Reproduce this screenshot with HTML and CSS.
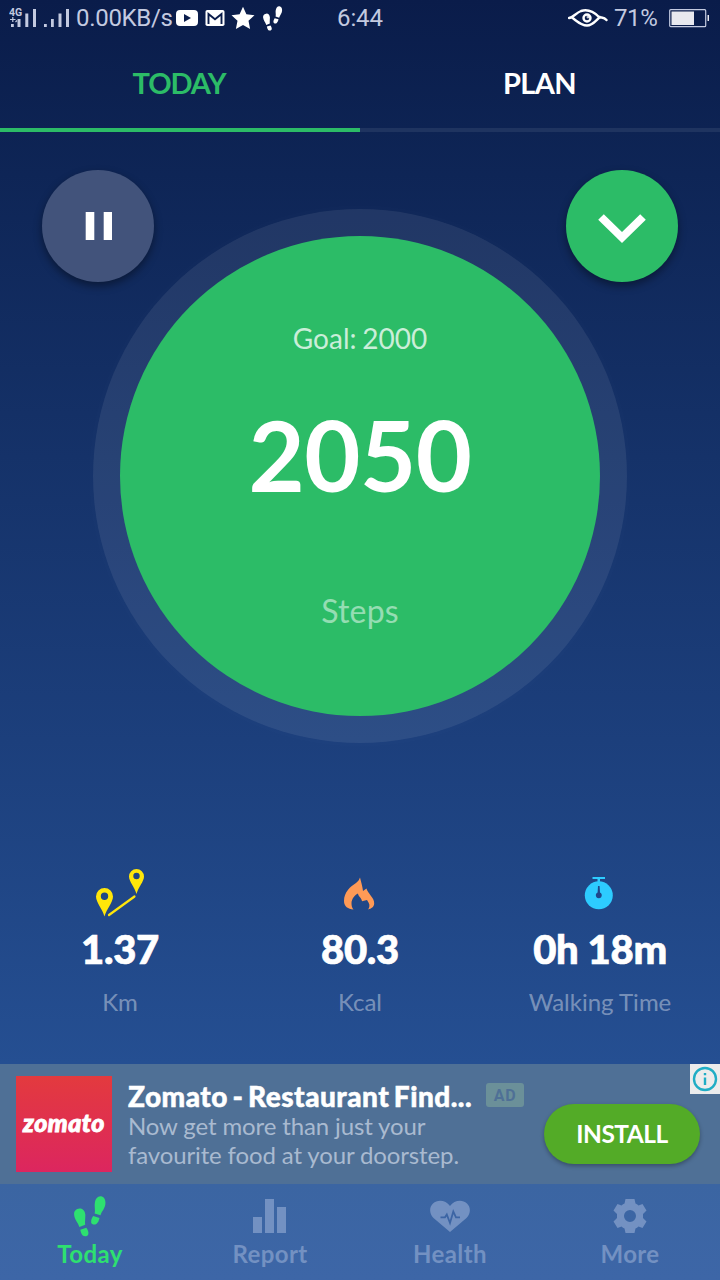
FILE: index.html
```html
<!DOCTYPE html>
<html lang="en">
<head>
<meta charset="utf-8">
<title>Step Counter</title>
<link rel="stylesheet" href="styles.css">
</head>
<body>
<svg class="defs" width="0" height="0" aria-hidden="true">
  <symbol id="feet" viewBox="0 0 32 41">
    <path d="M5.500 12.500C8.500 12.200 11 14.700 11.300 18.500C11.500 22 10.700 24.500 11.200 28.800L5.400 31C4 26.500.4 23.500.1 18.500C-.1 15 2.200 12.800 5.500 12.500Z"/>
    <path d="M6.300 33.700L12.300 31.800C13.800 33.700 14.800 36.200 14.300 38.200C13.700 40.700 10.200 41 8.500 39.200C7.200 37.800 6.700 35.500 6.300 33.700Z"/>
    <path d="M27 .300C30 .7 31.700 3.700 31.400 7.500C31.200 12.500 27.700 15 26.500 19.300L20.600 17.400C21.500 13.800 20.300 11.500 20.800 7.500C21.200 3 23.700-.1 27 .3Z"/>
    <path d="M19.200 20L25.500 21.900C25 24 24.200 26.300 22.600 27.700C20.700 29.200 17.700 28.700 17.200 26.500C16.800 24.300 17.900 21.800 19.200 20Z"/>
  </symbol>
</svg>
<div class="app">
  <header class="status">
    <svg class="signals" width="64" height="24" viewBox="0 0 64 24">
      <text class="net" x="0" y="10">4G</text>
      <path d="M2 18h2.800v3H2zM8.500 13h3v8h-3zM16.300 7.500h3V21h-3zM24 3h3v18h-3zM35 18h2.800v3H35zM42 13h2.800v8H42zM49.500 7.500h3V21h-3zM57 3h3v18h-3z"/>
      <path d="M1 13.500h5.500M3.800 11v5M6.500 16l1.500-1.500" class="mark"/>
    </svg>
    <span class="speed">0.00KB/s</span>
    <svg class="notices" width="112" height="28" viewBox="0 0 112 28">
      <path fill-rule="evenodd" d="M4 4H18Q22 4 22 8V16Q22 20 18 20H4Q0 20 0 16V8Q0 4 4 4ZM8 8V16L15 12Z"/>
      <rect x="29.500" y="4" width="19" height="16" rx="1.800"/>
      <path class="letter" d="M32.500 18V8L39 13.300L45.500 8V18"/>
      <path d="M67 .800L70.400 8.200L78.500 9.200L72.500 14.800L74.100 23L67 19L59.900 23L61.500 14.800L55.500 9.200L63.600 8.200Z"/>
      <use href="#feet" x="87" y="0" width="19.500" height="25"/>
    </svg>
    <span class="clock">6:44</span>
    <svg class="eye" width="40" height="20" viewBox="0 0 40 20">
      <path d="M1 10C5 9.500 8 5 13 3C20 .8 26 4 31 9C34 10 36 9 38.500 12M4 9.500C10 14 13 17.500 19 17.500C25 17.500 28 12 32 9"/>
      <circle cx="19" cy="10" r="3.500"/><circle class="dot" cx="20" cy="9" r="1"/>
    </svg>
    <span class="percent">71%</span>
    <svg class="battery" width="41" height="20" viewBox="0 0 41 20"><rect x=".7" y="1.700" width="36" height="17" rx="1"/><path d="M2.500 3.500H25V17H2.500ZM38.500 7H40V13H38.500Z"/></svg>
  </header>

  <nav class="tabs">
    <a class="tab active">TODAY</a>
    <a class="tab">PLAN</a>
  </nav>

  <main class="stage">
    <div class="dial">
      <div class="dial-face">
        <div class="goal">Goal: 2000</div>
        <div class="count">2050</div>
        <div class="unit">Steps</div>
      </div>
    </div>
    <button class="round pause" aria-label="Pause"><svg width="28" height="30" viewBox="0 0 28 30"><path d="M1.700 1H10.300V29H1.700ZM19.700 1H28V29H19.700Z"/></svg></button>
    <button class="round expand" aria-label="Expand"><svg width="48" height="32" viewBox="0 0 48 32"><path d="M3 5L24 25.500L45 5"/></svg></button>
  </main>

  <section class="stats">
    <div class="stat">
      <svg class="stat-icon route" width="50" height="50" viewBox="0 0 50 50">
        <path fill-rule="evenodd" d="M9.500 48.500C7.500 41 1 34.500 1 28.500A8.500 8.500 0 0 1 18 28.500C18 34.500 11.500 41 9.500 48.500ZM9.500 24.500A3.700 3.700 0 1 0 9.500 31.900A3.700 3.700 0 1 0 9.500 24.500ZM41.500 26C39.700 19 34 13.500 34 8.500A7.500 7.500 0 0 1 49 8.500C49 13.500 43.300 19 41.500 26ZM41.500 4.800A3.200 3.200 0 1 0 41.500 11.200A3.200 3.200 0 1 0 41.500 4.800Z"/>
        <path class="line" d="M14 47L39.500 28.500"/>
      </svg>
      <div class="value">1.37</div><div class="label">Km</div>
    </div>
    <div class="stat">
      <svg class="stat-icon flame" width="32" height="34" viewBox="0 0 32 34"><path d="M17 .500C18 5 19.500 9 20 14L23.500 11.500C24.500 16.500 31.500 20.500 31.200 26.500C31 30 28.500 31.500 25 32.500C26.500 30.500 27 28 25.500 25.500L24 23L19 24.200C18.500 20.500 15.500 20 15 16.500C12.500 17 8.500 22 8.500 26C8.500 29 9 31 10.500 32.500C5 32 1 29.500 1 24C1 15 7.500 9.500 13 6C15 4.500 16 3 17 .5Z"/></svg>
      <div class="value">80.3</div><div class="label">Kcal</div>
    </div>
    <div class="stat">
      <svg class="stat-icon watch" width="30" height="33" viewBox="0 0 30 33"><path d="M8.500 0H21V2H16V5H13.500V2H8.500Z"/><circle cx="14.800" cy="18.300" r="14"/><path class="hand" d="M14 9H15.600L16 15.600A3 3 0 1 1 13.600 15.600Z"/></svg>
      <div class="value">0h 18m</div><div class="label">Walking Time</div>
    </div>
  </section>

  <aside class="ad">
    <div class="brand">zomato</div>
    <div class="ad-copy">
      <div class="ad-head"><span class="ad-title">Zomato - Restaurant Find...</span><span class="ad-tag">AD</span></div>
      <div class="ad-text">Now get more than just your<br>favourite food at your doorstep.</div>
    </div>
    <button class="install">INSTALL</button>
    <div class="info"><svg width="30" height="30" viewBox="0 0 30 30"><circle cx="15" cy="15" r="11"/><path d="M15 13.500V21M15 9V11.200"/></svg></div>
  </aside>

  <nav class="bottom">
    <a class="item current"><svg width="32" height="41"><use href="#feet" width="32" height="41"/></svg><span>Today</span></a>
    <a class="item"><svg width="34" height="41" viewBox="0 0 34 41"><path d="M0 21H9V37H0ZM12 3H21V37H12ZM24 11H33V37H24Z"/></svg><span>Report</span></a>
    <a class="item"><svg width="40" height="41" viewBox="0 0 40 41"><path d="M20 36L3.500 22C-1 17.500-.8 11 3 7.500C8 3 16 4.500 20 10C24 4.500 32 3 37 7.500C40.800 11 41 17.500 36.500 22Z"/><path class="pulse" d="M10.500 21.300H15L16.800 18.500L20 27L23.300 15.500L26 21.300H30"/></svg><span>Health</span></a>
    <a class="item"><svg width="34" height="41" viewBox="0 0 34 41"><path fill-rule="evenodd" d="M12.500 3H21.500L22.500 7.500Q24 8 25.500 9.500L29.500 8L33.500 14.500L30 18V22L33.500 25.500L29.500 32L25.500 30.500Q24 32 22.500 32.500L21.500 37H12.500L11.500 32.500Q10 32 8.500 30.500L4.500 32L.500 25.500L4 22V18L.5 14.500L4.500 8L8.500 9.500Q10 8 11.500 7.500ZM17 14A6 6 0 1 0 17 26A6 6 0 1 0 17 14Z"/></svg><span>More</span></a>
  </nav>
</div>
</body>
</html>
```

FILE: styles.css
```css
* { box-sizing: border-box; }
body { margin: 0; font-family: Lato, "Liberation Sans", sans-serif; color: #fff; }
button { border: 0; padding: 0; font: inherit; color: inherit; }
svg { display: block; flex: none; }
.defs { position: absolute; }
.app {
  width: 720px;
  height: 1280px;
  overflow: hidden;
  display: flex;
  flex-direction: column;
  background: linear-gradient(#0a1c4a 0, #0d2353 130px, #1c3f7c 740px, #254f92 1064px, #2a58a0 1280px);
}

.status {
  height: 40px;
  display: flex;
  align-items: flex-start;
  padding: 6px 10px 0 9px;
  font: 400 24px/24px Roboto, sans-serif;
  color: #c3cae0;
}
.signals { fill: #c3cae0; margin-right: 3px; }
.net { font: 700 10.5px Roboto, sans-serif; }
.mark { fill: none; stroke: #c3cae0; stroke-width: 1.2; }
.speed { width: 100px; white-space: nowrap; letter-spacing: -.3px; }
.notices { fill: #fff; }
.notices .letter { fill: none; stroke: #0a1c4a; stroke-width: 1.9; }
.clock { margin-left: 49px; width: 231px; letter-spacing: -.1px; }
.eye { margin-top: 2px; fill: none; stroke: #fff; stroke-width: 2.4; stroke-linecap: round; }
.eye .dot { stroke-width: 1; }
.percent { margin-left: 6px; width: 55px; letter-spacing: -.4px; }
.battery { margin-top: 2px; fill: #e8e9ef; }
.battery rect { fill: none; stroke: #c3cae0; stroke-width: 1.2; }

.tabs { height: 92px; display: grid; grid-template-columns: 1fr 1fr; }
.tab {
  border-bottom: 4px solid rgba(255, 255, 255, .08);
  text-align: center;
  font-size: 29px;
  font-weight: 700;
  line-height: 86px;
  letter-spacing: -.6px;
  padding-right: 1px;
}
.tab.active { color: #2cbc67; border-color: #2cbc67; letter-spacing: -1.1px; padding-right: 2px; }

.stage { height: 736px; display: grid; padding: 38px 42px 0; }
.stage > * { grid-area: 1 / 1; }
.round {
  width: 112px;
  height: 112px;
  border-radius: 50%;
  display: flex;
  align-items: center;
  justify-content: center;
  box-shadow: 0 4px 9px rgba(0, 0, 0, .4);
}
.pause { background: #42537b; justify-self: start; }
.pause svg { fill: #fff; }
.expand { background: #2cbc67; justify-self: end; }
.expand svg { margin-top: 4px; fill: none; stroke: #fff; stroke-width: 8; }
.dial {
  width: 534px;
  height: 534px;
  margin-top: 39px;
  justify-self: center;
  border-radius: 50%;
  padding: 27px;
  background: rgba(255, 255, 255, .08);
  box-shadow: 0 0 28px rgba(255, 255, 255, .018);
}
.dial-face {
  height: 480px;
  border-radius: 50%;
  background: #2cbc67;
  text-align: center;
  padding-top: 85px;
}
.goal { font-size: 28px; line-height: 34px; letter-spacing: 0; word-spacing: -1.5px; color: rgba(255, 255, 255, .75); }
.count { font-size: 97px; line-height: 120px; font-weight: 700; margin-top: 40px; letter-spacing: -.5px; }
.unit { font-size: 32px; line-height: 40px; color: rgba(255, 255, 255, .5); margin-top: 76px; letter-spacing: .2px; }

.stats { height: 196px; display: grid; grid-template-columns: repeat(3, 1fr); }
.stat { display: flex; flex-direction: column; align-items: center; }
.route { fill: #ffe60a; }
.route .line { stroke: #ffe60a; stroke-width: 2.2; stroke-linecap: round; }
.flame { fill: #ff9a56; margin: 9px 2px 7px 0; }
.watch { fill: #2dccff; margin: 9px 2px 8px 0; }
.watch .hand { fill: #20478a; }
.value { font-size: 40px; line-height: 50px; font-weight: 900; margin-top: 6px; letter-spacing: -.3px; -webkit-text-stroke: .7px #fff; }
.label { font-size: 24px; line-height: 30px; margin-top: 13px; color: rgba(255, 255, 255, .4); }
.stat-icon { overflow: visible; }

.ad { position: relative; height: 120px; display: flex; background: #4f7096; padding: 12px 20px 0 16px; }
.brand {
  width: 96px;
  height: 96px;
  line-height: 93px;
  text-align: center;
  background: linear-gradient(#e33a3e, #dc265f);
  font-size: 25px;
  font-weight: 900;
  font-style: italic;
  letter-spacing: .5px;
  -webkit-text-stroke: .9px #fff;
}
.ad-copy { margin-left: 16px; width: 416px; }
.ad-head { display: flex; align-items: center; height: 28px; margin-top: 6px; white-space: nowrap; }
.ad-title { width: 358px; font-size: 28px; font-weight: 900; line-height: 28px; letter-spacing: .48px; word-spacing: -2.5px; -webkit-text-stroke: .5px #fff; }
.ad-tag {
  width: 38px;
  height: 24px;
  margin-top: -2px;
  border-radius: 3px;
  background: #6b9099;
  color: #4f7096;
  text-align: center;
  font: 700 16px/25px Roboto, sans-serif;
  letter-spacing: .8px;
}
.ad-text { font-size: 24px; line-height: 29px; margin-top: 1px; color: #a9bad0; white-space: nowrap; letter-spacing: -.13px; }
.install {
  width: 156px;
  height: 60px;
  margin-top: 28px;
  padding-bottom: 1px;
  border-radius: 30px;
  background: #53ab27;
  font-size: 24.500px;
  letter-spacing: -.5px;
  font-weight: 700;
  box-shadow: 0 2px 4px rgba(0, 0, 0, .3);
}
.info { position: absolute; top: 0; right: 0; background: #ececec; }
.info svg { fill: none; stroke: #1fadc5; stroke-width: 2.4; }

.bottom { height: 96px; display: grid; grid-template-columns: repeat(4, 1fr); background: linear-gradient(#3b65a2, #3d66a7); }
.item {
  display: flex;
  flex-direction: column;
  align-items: center;
  padding-top: 12px;
  color: #7391c2;
  fill: #7391c2;
  font-size: 24px;
  font-weight: 700;
  line-height: 30px;
  letter-spacing: .4px;
}
.item span { margin-top: 2px; }
.item.current { color: #2ee070; fill: #2ee070; }
.pulse { fill: none; stroke: #3c65a4; stroke-width: 1.8; }
```
